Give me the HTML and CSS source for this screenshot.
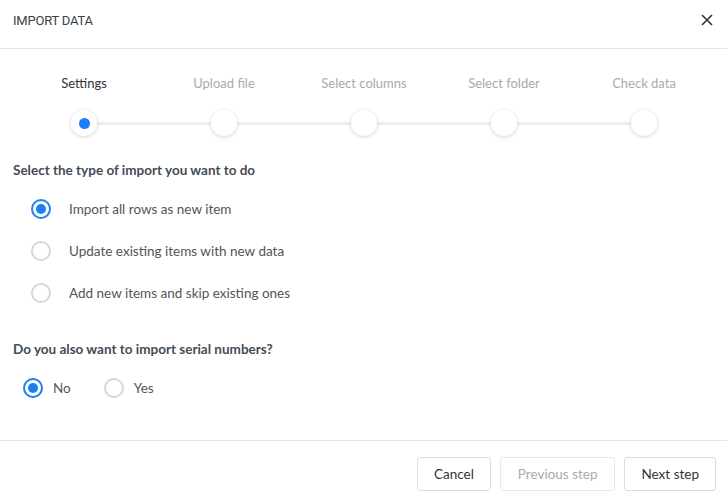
FILE: index.html
```html
<!DOCTYPE html>
<html>
<head>
<meta charset="utf-8">
<link rel="stylesheet" href="styles.css">
</head>
<body>
<div class="dialog">
  <header class="header">
    <h1 class="title">IMPORT DATA</h1>
    <button class="close" aria-label="Close">
      <svg width="12" height="12" viewBox="0 0 12 12"><path d="M1 1L11 11M11 1L1 11" stroke="#333" stroke-width="1.6" fill="none"/></svg>
    </button>
  </header>
  <main class="content">
    <div class="stepper">
      <div class="track"></div>
      <div class="step active"><span class="step-label">Settings</span><span class="step-dot"><span class="step-inner"></span></span></div>
      <div class="step"><span class="step-label">Upload file</span><span class="step-dot"></span></div>
      <div class="step"><span class="step-label">Select columns</span><span class="step-dot"></span></div>
      <div class="step"><span class="step-label">Select folder</span><span class="step-dot"></span></div>
      <div class="step"><span class="step-label">Check data</span><span class="step-dot"></span></div>
    </div>
    <section class="group">
      <h2 class="question">Select the type of import you want to do</h2>
      <div class="options vertical">
        <label class="option"><span class="radio checked"></span><span>Import all rows as new item</span></label>
        <label class="option"><span class="radio"></span><span>Update existing items with new data</span></label>
        <label class="option"><span class="radio"></span><span>Add new items and skip existing ones</span></label>
      </div>
    </section>
    <section class="group second">
      <h2 class="question">Do you also want to import serial numbers?</h2>
      <div class="options horizontal">
        <label class="option"><span class="radio checked"></span><span>No</span></label>
        <label class="option"><span class="radio"></span><span>Yes</span></label>
      </div>
    </section>
  </main>
  <footer class="footer">
    <button class="btn">Cancel</button>
    <button class="btn disabled">Previous step</button>
    <button class="btn">Next step</button>
  </footer>
</div>
</body>
</html>
```
FILE: styles.css
```css
* { box-sizing: border-box; }
html, body { margin: 0; padding: 0; background: #fff; }
body { font-family: "Lato", "Open Sans", sans-serif; color: #444; }
.dialog { width: 727px; height: 502px; display: flex; flex-direction: column; background: #fff; }
.header { height: 49px; border-bottom: 1px solid #e4e4e4; display: flex; align-items: center; justify-content: space-between; padding: 0 14px 8px 13px; }
.title { margin: 0; font-family: "Roboto", sans-serif; font-weight: 400; font-size: 13px; color: #3d4148; letter-spacing: -0.2px; }
.close { border: 0; background: none; padding: 0; width: 12px; height: 12px; display: flex; }
.content { flex: 1; padding: 0 13px; }
.stepper { position: relative; display: flex; padding-left: 1px; margin-top: 25px; }
.track { position: absolute; left: 71px; width: 560px; top: 48px; height: 3px; background: #efefef; }
.step { width: 140px; display: flex; flex-direction: column; align-items: center; position: relative; }
.step-label { font-size: 13px; color: #aaa; height: 18px; line-height: 18px; }
.step.active .step-label { color: #333; }
.step-dot { width: 26px; height: 26px; border-radius: 50%; background: #fff; box-shadow: 0 1px 4px rgba(0,0,0,0.18); margin-top: 18px; display: flex; align-items: center; justify-content: center; }
.step-inner { width: 11px; height: 11px; border-radius: 50%; background: #1a7ef5; }
.group { margin-top: 25px; }
.second { margin-top: 37px; }
.question { margin: 0; font-size: 13.5px; font-weight: 700; color: #454c55; line-height: 18px; }
.options.vertical { display: flex; flex-direction: column; gap: 22px; padding-left: 18px; margin-top: 20px; }
.options.horizontal { display: flex; gap: 33px; padding-left: 10px; margin-top: 20px; }
.option { display: flex; align-items: center; font-size: 13.5px; color: #555; line-height: 20px; }
.options.vertical .option { gap: 18px; }
.options.horizontal .option { gap: 10px; }
.radio { width: 20px; height: 20px; border-radius: 50%; border: 2px solid #d5d7da; flex: none; display: flex; align-items: center; justify-content: center; }
.radio.checked { border-color: #1a7ef5; }
.radio.checked::after { content: ""; width: 10px; height: 10px; border-radius: 50%; background: #1a7ef5; }
.footer { height: 62px; border-top: 1px solid #e4e4e4; display: flex; justify-content: flex-end; align-items: flex-start; gap: 9px; padding: 16px 11px 0 0; }
.btn { font-family: "Lato", sans-serif; font-size: 13.5px; color: #333; background: #fff; border: 1px solid #dcdcdc; border-radius: 3px; height: 34px; padding: 0 16px; }
.btn.disabled { color: #aaa; border-color: #e8e8e8; padding: 0 17px; }
```
